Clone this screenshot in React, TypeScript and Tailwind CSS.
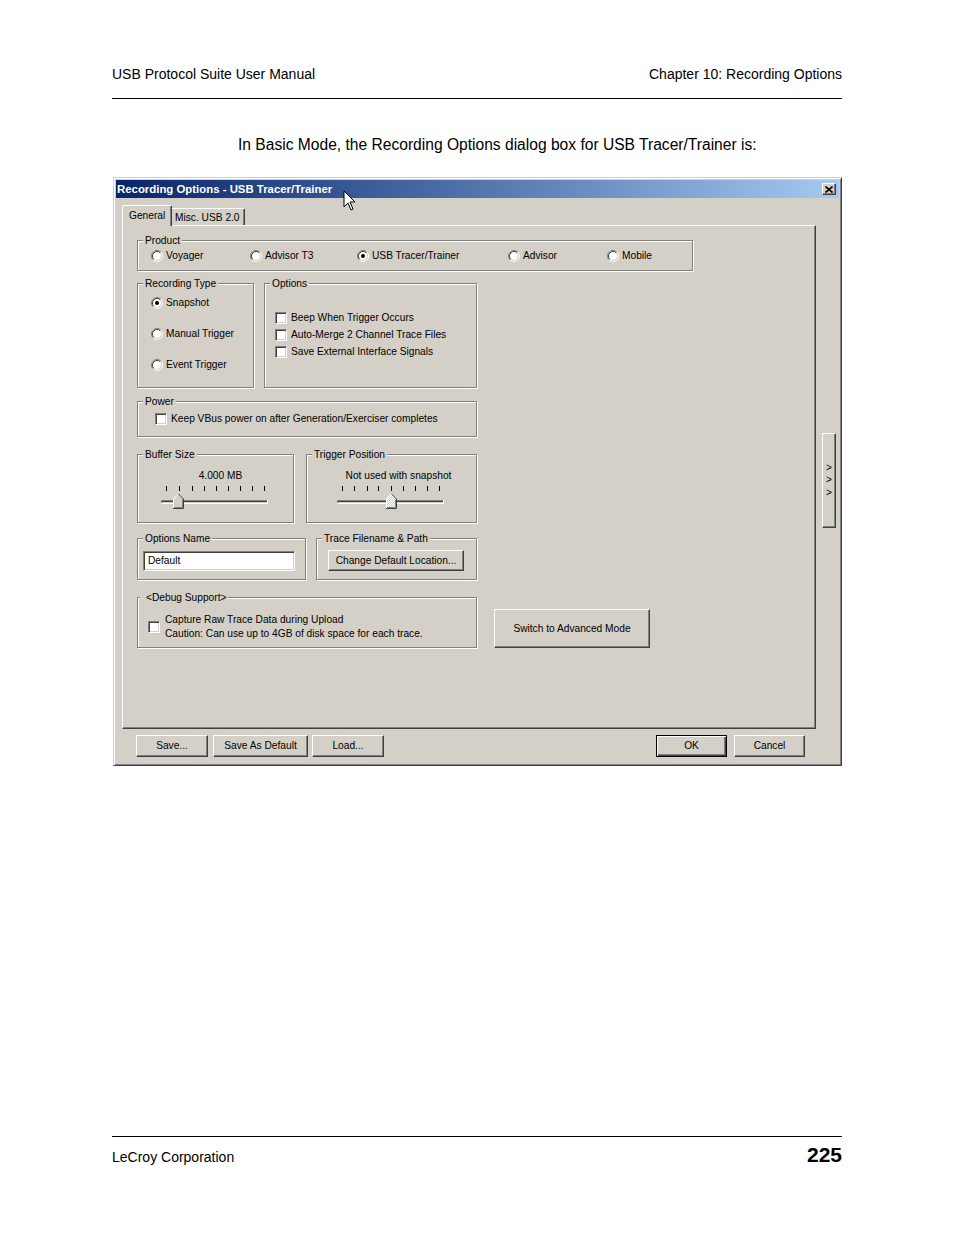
import React from 'react';

// Win2000-style bevels
const raised =
  'bg-[#d4d0c8] border border-t-white border-l-white border-r-[#404040] border-b-[#404040] shadow-[inset_-1px_-1px_0_#808080]';
const sunken =
  'bg-white border border-t-[#808080] border-l-[#808080] border-r-white border-b-white shadow-[inset_1px_1px_0_#404040,inset_-1px_-1px_0_#d4d0c8]';

const Radio = ({ checked }: { checked?: boolean }) => (
  <svg width="12" height="12" viewBox="0 0 12 12" className="shrink-0">
    <circle cx="6" cy="6" r="4.5" fill="#fff" />
    <path d="M2.11 9.89A5.5 5.5 0 0 1 9.89 2.11" fill="none" stroke="#808080" />
    <path d="M2.82 9.18A4.5 4.5 0 0 1 9.18 2.82" fill="none" stroke="#404040" />
    <path d="M9.89 2.11A5.5 5.5 0 0 1 2.11 9.89" fill="none" stroke="#fff" />
    <path d="M9.18 2.82A4.5 4.5 0 0 1 2.82 9.18" fill="none" stroke="#d4d0c8" />
    {checked && <circle cx="6" cy="6" r="2" fill="#000" />}
  </svg>
);

const Check = () => <span className={`block w-[12px] h-[12px] shrink-0 ${sunken}`} />;

interface GroupProps {
  label: string;
  className?: string;
  legendClass?: string;
  children?: React.ReactNode;
}

const Group: React.FC<GroupProps> = ({ label, className = '', legendClass = 'left-[5px] px-[2px]', children }) => (
  <div className={`relative border border-[#808080] shadow-[inset_1px_1px_0_#fff,1px_1px_0_#fff] ${className}`}>
    <span className={`absolute -top-[6px] leading-[12px] bg-[#d4d0c8] whitespace-nowrap ${legendClass}`}>{label}</span>
    {children}
  </div>
);

const Btn = ({ children, className = '' }: { children: React.ReactNode; className?: string }) => (
  <button type="button" className={`flex items-center justify-center whitespace-nowrap ${raised} ${className}`}>
    {children}
  </button>
);

// trackbar drawing: ticks, sunken channel, pointed thumb
const Slider = ({
  width,
  ticks,
  track,
  thumb,
  disabled,
}: {
  width: number;
  ticks: number[];
  track: [number, number];
  thumb: number;
  disabled?: boolean;
}) => {
  const [a, b] = track;
  const L = thumb;
  return (
    <svg width={width} height="25" viewBox={`0 0 ${width} 25`} className="block">
      <defs>
        <pattern id="dither" width="2" height="2" patternUnits="userSpaceOnUse">
          <rect width="2" height="2" fill="#d4d0c8" />
          <rect width="1" height="1" fill="#fff" />
          <rect x="1" y="1" width="1" height="1" fill="#fff" />
        </pattern>
      </defs>
      {ticks.map((t) => (
        <rect key={t} x={t} y="1" width="1" height="5" fill="#000" />
      ))}
      <rect x={a} y="15" width={b - a} height="4" fill="#fff" />
      <rect x={a} y="15" width={b - a - 1} height="1" fill="#808080" />
      <rect x={a} y="15" width="1" height="3" fill="#808080" />
      <rect x={a + 1} y="16" width={b - a - 2} height="1" fill="#404040" />
      <rect x={a + 1} y="17" width={b - a - 2} height="1" fill="#d4d0c8" />
      <polygon
        points={`${L},24 ${L},14 ${L + 5.5},8.5 ${L + 11},14 ${L + 11},24`}
        fill={disabled ? 'url(#dither)' : '#d4d0c8'}
      />
      <path d={`M${L + 0.5} 23.5V14L${L + 5.5} 9`} fill="none" stroke="#fff" />
      <path d={`M${L + 5.5} 9L${L + 10.5} 14V23.5H${L}`} fill="none" stroke="#404040" />
      <path d={`M${L + 9.5} 14.5V22.5H${L + 1}`} fill="none" stroke="#808080" />
    </svg>
  );
};

const products = [
  { name: 'Voyager', w: 'w-[99px]' },
  { name: 'Advisor T3', w: 'w-[107px]' },
  { name: 'USB Tracer/Trainer', w: 'w-[151px]', on: true },
  { name: 'Advisor', w: 'w-[99px]' },
  { name: 'Mobile', w: '' },
];

const Dialog = () => (
  <div className="relative ml-[1px] mt-[23px] w-[729px] h-[589px] p-[2px] bg-[#d4d0c8] border border-t-[#d4d0c8] border-l-[#d4d0c8] border-r-[#404040] border-b-[#404040] shadow-[inset_1px_1px_0_#fff,inset_-1px_-1px_0_#808080] text-[10.2px] text-black">
    {/* title bar */}
    <div className="h-[18px] flex items-center justify-between pl-[1px] pr-[3px] bg-gradient-to-r from-[#0a246a] to-[#a6caf0]">
      <span className="text-white font-bold text-[11.4px] leading-[14px]">Recording Options - USB Tracer/Trainer</span>
      <button type="button" className={`w-[14px] h-[12px] flex items-center justify-center ${raised}`}>
        <svg width="8" height="7" viewBox="0 0 8 7">
          <path d="M0.5 0.5L7.5 6.5M7.5 0.5L0.5 6.5" stroke="#000" strokeWidth="1.6" />
        </svg>
      </button>
    </div>

    <div className="flex pl-[6px] pt-[7px]">
      <div className="w-[694px] flex flex-col">
        {/* tabs */}
        <div className="flex items-end h-[20px]">
          <div className="relative z-10 -mb-[1px] w-[50px] h-[21px] pl-[6px] pt-[3px] leading-[13px] bg-[#d4d0c8] border-t border-l border-r border-t-white border-l-white border-r-[#404040] shadow-[inset_-1px_0_0_#808080] rounded-t-[2px]">
            General
          </div>
          <div className="w-[73px] h-[17px] pl-[3px] pt-[3px] leading-[12px] border-t border-r border-t-white border-r-[#404040] shadow-[inset_-1px_0_0_#808080] rounded-tr-[2px]">
            Misc. USB 2.0
          </div>
        </div>

        {/* tab page */}
        <div className="h-[504px] flex flex-col pl-[14px] pt-[14px] border border-t-white border-l-white border-r-[#404040] border-b-[#404040] shadow-[inset_-1px_-1px_0_#808080]">
          <Group label="Product" className="w-[556px] h-[31px] flex items-center pl-[13px] pt-[1px]">
            {products.map((p) => (
              <div key={p.name} className={`flex items-center gap-[3px] ${p.w}`}>
                <Radio checked={p.on} />
                <span>{p.name}</span>
              </div>
            ))}
          </Group>

          <div className="flex gap-[10px] mt-[12px]">
            <Group label="Recording Type" className="w-[117px] h-[105px] flex flex-col gap-[15px] pl-[13px] pt-[11px]">
              {['Snapshot', 'Manual Trigger', 'Event Trigger'].map((t, i) => (
                <div key={t} className="h-[16px] flex items-center gap-[3px] whitespace-nowrap">
                  <Radio checked={i === 0} />
                  <span>{t}</span>
                </div>
              ))}
            </Group>
            <Group label="Options" className="w-[213px] h-[105px] flex flex-col pl-[10px] pt-[25px]">
              {['Beep When Trigger Occurs', 'Auto-Merge 2 Channel Trace Files', 'Save External Interface Signals'].map((t) => (
                <div key={t} className="h-[17px] flex items-center gap-[4px] whitespace-nowrap">
                  <Check />
                  <span>{t}</span>
                </div>
              ))}
            </Group>
          </div>

          <Group label="Power" className="mt-[13px] w-[340px] h-[36px] flex items-center gap-[4px] pl-[17px] pb-[1px]">
            <Check />
            <span className="whitespace-nowrap">Keep VBus power on after Generation/Exerciser completes</span>
          </Group>

          <div className="flex gap-[12px] mt-[17px]">
            <Group label="Buffer Size" className="w-[157px] h-[69px] pt-[15px]">
              <div className="leading-[12px] text-center pl-[10px]">4.000 MB</div>
              <div className="mt-[3px]">
                <Slider width={155} ticks={[28, 41, 54, 66, 78, 90, 102, 114, 126]} track={[23, 130]} thumb={35} />
              </div>
            </Group>
            <Group label="Trigger Position" className="w-[171px] h-[69px] pt-[15px]">
              <div className="leading-[12px] text-center pl-[14px]">Not used with snapshot</div>
              <div className="mt-[3px]">
                <Slider width={169} ticks={[35, 47, 60, 71, 84, 96, 108, 120, 132]} track={[30, 137]} thumb={79} disabled />
              </div>
            </Group>
          </div>

          <div className="flex gap-[10px] mt-[15px]">
            <Group label="Options Name" className="w-[169px] h-[42px] pl-[5px] pt-[12px]">
              <div className={`w-[152px] h-[20px] flex items-center pl-[4px] ${sunken}`}>Default</div>
            </Group>
            <Group label="Trace Filename & Path" className="w-[161px] h-[42px] pl-[11px] pt-[11px]">
              <Btn className="w-[136px] h-[21px]">Change Default Location...</Btn>
            </Group>
          </div>

          <div className="flex items-end mt-[17px]">
            <Group
              label="<Debug Support>"
              legendClass="left-[2px] pl-[6px] pr-[2px]"
              className="w-[340px] h-[51px] flex items-center gap-[5px] pl-[10px] pt-[9px]"
            >
              <Check />
              <div className="leading-[13.6px] whitespace-nowrap">
                <div>Capture Raw Trace Data during Upload</div>
                <div>Caution: Can use up to 4GB of disk space for each trace.</div>
              </div>
            </Group>
            <Btn className="ml-[17px] w-[156px] h-[39px]">Switch to Advanced Mode</Btn>
          </div>
        </div>

        {/* dialog buttons */}
        <div className="flex mt-[6px] h-[22px] pl-[14px] pr-[11px]">
          <Btn className="w-[72px] h-[22px]">Save...</Btn>
          <Btn className="ml-[5px] w-[95px] h-[22px]">Save As Default</Btn>
          <Btn className="ml-[4px] w-[72px] h-[22px]">Load...</Btn>
          <button
            type="button"
            className="ml-auto w-[71px] h-[22px] flex items-center justify-center bg-[#d4d0c8] border border-black shadow-[inset_1px_1px_0_#fff,inset_-1px_-1px_0_#404040,inset_-2px_-2px_0_#808080]"
          >
            OK
          </button>
          <Btn className="ml-[7px] w-[71px] h-[22px]">Cancel</Btn>
        </div>
      </div>

      {/* expand to advanced */}
      <div className={`ml-[6px] mt-[228px] w-[14px] h-[95px] flex flex-col items-center justify-center text-[10px] leading-[12.5px] ${raised}`}>
        <span>&gt;</span>
        <span>&gt;</span>
        <span>&gt;</span>
      </div>
    </div>

    {/* mouse pointer */}
    <svg className="absolute left-[229px] top-[12px]" width="13" height="21" viewBox="0 0 13 21">
      <path d="M1 1V17L5 13L8 20L10 19L7 12H12Z" fill="#fff" stroke="#000" strokeLinejoin="miter" />
    </svg>
  </div>
);

export default function App() {
  return (
    <div className="w-[954px] h-[1235px] flex flex-col bg-white text-black font-['Liberation_Sans',Arial,sans-serif]">
      <div className="px-[112px] pt-[66px]">
        <header className="flex justify-between text-[14px] leading-[16px] pb-[16px] border-b border-black">
          <span>USB Protocol Suite User Manual</span>
          <span>Chapter 10: Recording Options</span>
        </header>
        <p className="mt-[37px] pl-[126px] text-[15.6px] leading-[18px]">
          In Basic Mode, the Recording Options dialog box for USB Tracer/Trainer is:
        </p>
        <Dialog />
      </div>

      <footer className="mt-auto mx-[112px] border-t border-black pt-[8px] pb-[66px]">
        <div className="h-[24px] flex items-center justify-between">
          <span className="text-[14px]">LeCroy Corporation</span>
          <span className="text-[21px] leading-[24px] font-bold mb-[5px]">225</span>
        </div>
      </footer>
    </div>
  );
}
